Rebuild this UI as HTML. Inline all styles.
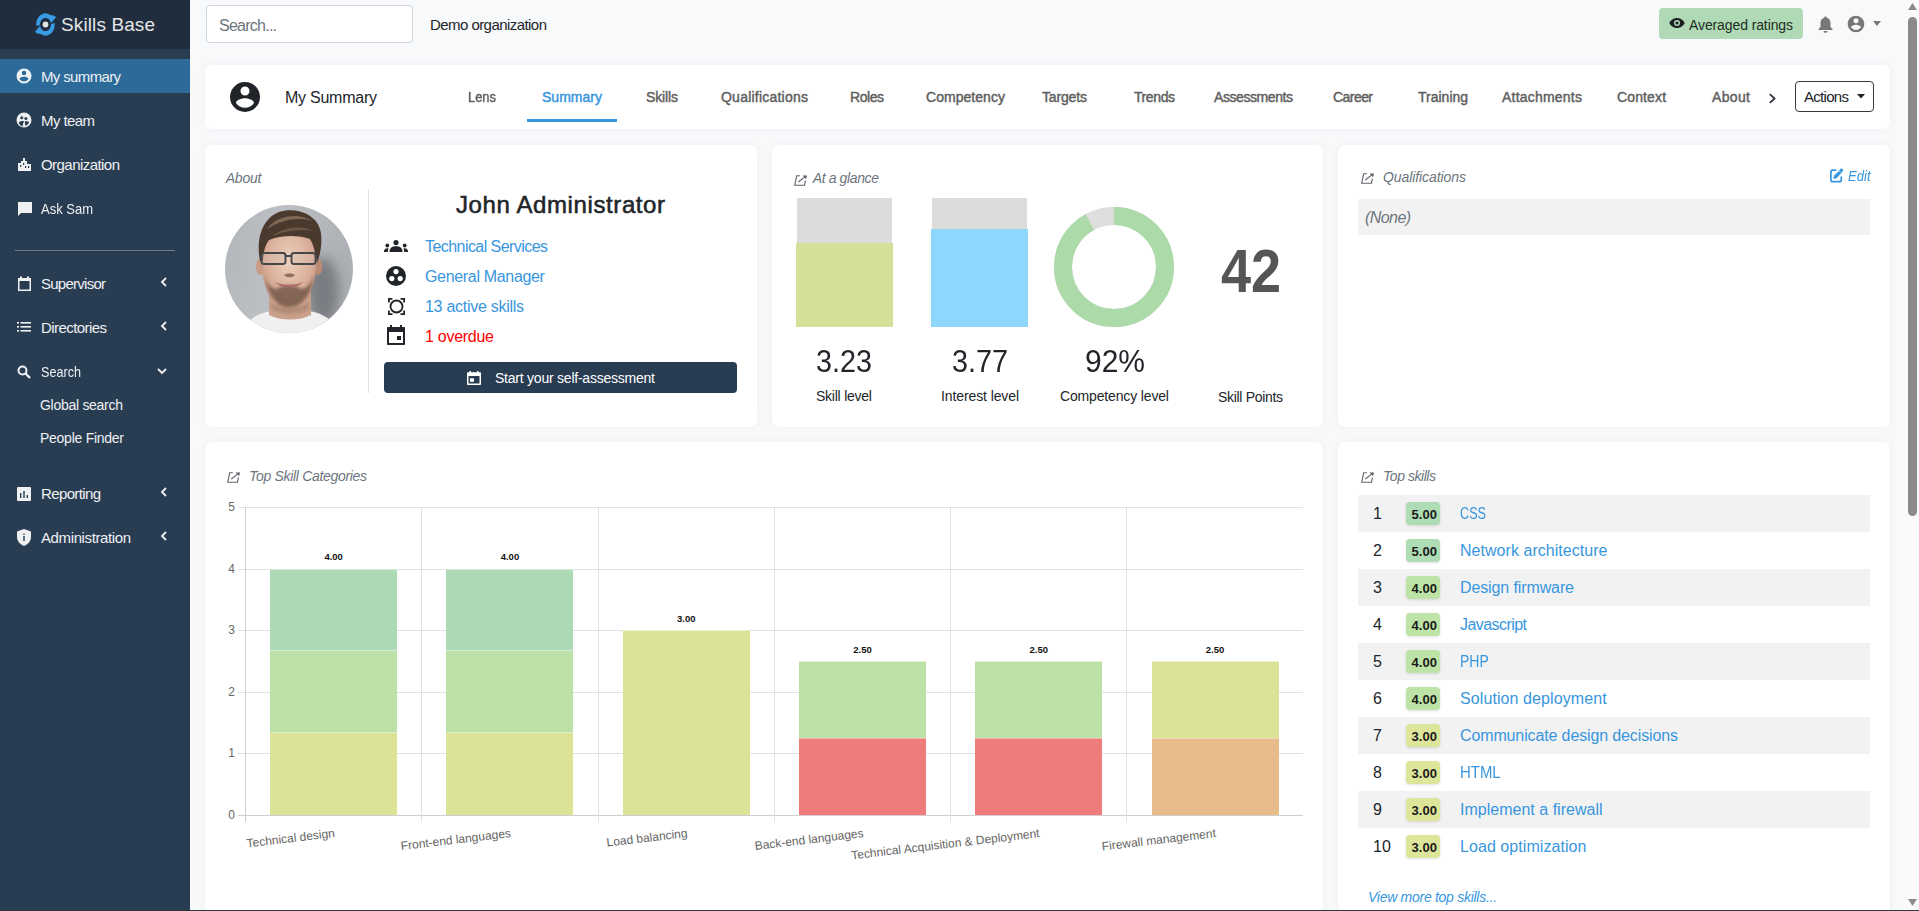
<!DOCTYPE html>
<html><head><meta charset="utf-8"><title>Skills Base</title>
<style>
html,body{margin:0;padding:0;}
body{width:1919px;height:911px;overflow:hidden;background:#f7f9fb;position:relative;font-family:"Liberation Sans",sans-serif;}
.t{position:absolute;line-height:1;white-space:nowrap;}
.r{position:absolute;}
</style></head><body>
<div class="r" style="left:0px;top:0px;width:190px;height:911px;background:#293d52;"></div>
<div class="r" style="left:0px;top:0px;width:190px;height:49px;background:#1f2d3f;"></div>
<div class="r" style="left:0px;top:59px;width:190px;height:34px;background:#2c6a99;"></div>
<svg class="r" style="left:30px;top:8px;" width="30" height="30" viewBox="0 0 30 30"><g transform="translate(0 16.5) scale(1 1.2) translate(0 -16.5)"><path d="M6.39 17.78A9.2 9.2 0 0 1 20.10 8.53Q24.0 8.6 26.2 10.2L20.88 15.36A5.5 5.5 0 0 0 10.02 16.98Z" fill="#399be2"/><path d="M6.39 17.78A9.2 9.2 0 0 1 20.10 8.53Q24.0 8.6 26.2 10.2L20.88 15.36A5.5 5.5 0 0 0 10.02 16.98Z" fill="#399be2" transform="rotate(180 15.5 16.5)"/></g><circle cx="15.5" cy="16.5" r="2.9" fill="#e4e4e4"/></svg>
<div class="t" style="left:61.00px;top:14.91px;font-size:19px;color:#e6e6e6;letter-spacing:0.109px;">Skills Base</div>
<svg class="r" style="left:15px;top:67px;" width="18" height="18" viewBox="0 0 24 24"><path d="M12,19.2C9.5,19.2 7.29,17.92 6,16C6.03,14 10,12.9 12,12.9C14,12.9 17.97,14 18,16C16.71,17.92 14.5,19.2 12,19.2M12,5A3,3 0 0,1 15,8A3,3 0 0,1 12,11A3,3 0 0,1 9,8A3,3 0 0,1 12,5M12,2A10,10 0 0,0 2,12A10,10 0 0,0 12,22A10,10 0 0,0 22,12C22,6.47 17.5,2 12,2Z" fill="#eef0f2"/></svg>
<div class="t" style="left:41.00px;top:69.30px;font-size:15px;color:#eef0f2;letter-spacing:-0.644px;">My summary</div>
<svg class="r" style="left:15px;top:111px;" width="18" height="18" viewBox="0 0 24 24"><path d="M12 2A10 10 0 1 0 12 22A10 10 0 1 0 12 2Z" fill="#eef0f2"/><circle cx="9" cy="9" r="2" fill="#293d52"/><circle cx="14.5" cy="10" r="2" fill="#293d52"/><path d="M5 16C6 13 11 13 12 14C11 16 10 19 10 21C8 20 6 18 5 16Z" fill="#293d52"/><path d="M13 14C15 13 18 14 19 15C18 17 16 19 14 20C14 18 13 16 13 14Z" fill="#293d52"/></svg>
<div class="t" style="left:41.00px;top:113.30px;font-size:15px;color:#eef0f2;letter-spacing:-0.587px;">My team</div>
<svg class="r" style="left:17px;top:157px;" width="15" height="15" viewBox="0 0 15 15"><path d="M1 14V6H4V4H6V1H8V4H10V7H14V14Z" fill="#eef0f2"/><rect x="3" y="8" width="1.2" height="2" fill="#293d52"/><rect x="6" y="6" width="1.2" height="2" fill="#293d52"/><rect x="8" y="9" width="1.2" height="2" fill="#293d52"/><rect x="11" y="9" width="1.2" height="2" fill="#293d52"/></svg>
<div class="t" style="left:41.00px;top:157.29px;font-size:15px;color:#eef0f2;letter-spacing:-0.550px;">Organization</div>
<svg class="r" style="left:17px;top:201px;" width="16" height="16" viewBox="0 0 16 16"><path d="M1 1H15V12H4L1 15Z" fill="#eef0f2"/></svg>
<div class="t" style="left:41.00px;top:201.29px;font-size:15px;color:#eef0f2;transform:scaleX(0.8667);transform-origin:0.00px 0;">Ask Sam</div>
<div class="r" style="left:15px;top:250px;width:160px;height:1px;background:#6d7b8a;"></div>
<svg class="r" style="left:17px;top:276px;" width="15" height="15" viewBox="0 0 15 15"><path d="M1 2H3V0.5H5V2H10V0.5H12V2H14V15H1Z M2.5 5V13.5H12.5V5Z" fill="#eef0f2" fill-rule="evenodd"/></svg>
<div class="t" style="left:41.00px;top:276.30px;font-size:15px;color:#eef0f2;letter-spacing:-0.744px;">Supervisor</div>
<svg class="r" style="left:17px;top:322px;" width="14" height="10" viewBox="0 0 14 10"><rect x="0" y="0" width="2" height="1.6" fill="#eef0f2"/><rect x="3.5" y="0" width="10.5" height="1.6" fill="#eef0f2"/><rect x="0" y="4" width="2" height="1.6" fill="#eef0f2"/><rect x="3.5" y="4" width="10.5" height="1.6" fill="#eef0f2"/><rect x="0" y="8" width="2" height="1.6" fill="#eef0f2"/><rect x="3.5" y="8" width="10.5" height="1.6" fill="#eef0f2"/></svg>
<div class="t" style="left:41.00px;top:320.30px;font-size:15px;color:#eef0f2;letter-spacing:-0.570px;">Directories</div>
<svg class="r" style="left:17px;top:365px;" width="14" height="14" viewBox="0 0 14 14"><circle cx="5.5" cy="5.5" r="4" fill="none" stroke="#eef0f2" stroke-width="2"/><path d="M8.5 8.5L13 13" stroke="#eef0f2" stroke-width="2.4"/></svg>
<div class="t" style="left:41.00px;top:364.30px;font-size:15px;color:#eef0f2;transform:scaleX(0.8412);transform-origin:0.00px 0;">Search</div>
<div class="t" style="left:40.00px;top:398.14px;font-size:14px;color:#eef0f2;letter-spacing:-0.282px;">Global search</div>
<div class="t" style="left:40.00px;top:431.14px;font-size:14px;color:#eef0f2;letter-spacing:-0.263px;">People Finder</div>
<svg class="r" style="left:17px;top:487px;" width="14" height="14" viewBox="0 0 14 14"><path d="M1 0H13A1 1 0 0 1 14 1V13A1 1 0 0 1 13 14H1A1 1 0 0 1 0 13V1A1 1 0 0 1 1 0Z" fill="#eef0f2"/><rect x="3" y="6" width="1.4" height="5" fill="#293d52"/><rect x="6.3" y="4" width="1.4" height="7" fill="#293d52"/><rect x="9.6" y="8" width="1.4" height="3" fill="#293d52"/></svg>
<div class="t" style="left:41.00px;top:486.30px;font-size:15px;color:#eef0f2;letter-spacing:-0.628px;">Reporting</div>
<svg class="r" style="left:17px;top:529px;" width="14" height="17" viewBox="0 0 14 17"><path d="M7 0L14 2.5V8C14 12 11 15.5 7 17C3 15.5 0 12 0 8V2.5Z" fill="#eef0f2"/><rect x="6.3" y="7" width="1.4" height="5" fill="#293d52"/><rect x="6.3" y="4.5" width="1.4" height="1.4" fill="#293d52"/></svg>
<div class="t" style="left:41.00px;top:530.29px;font-size:15px;color:#eef0f2;letter-spacing:-0.387px;">Administration</div>
<svg class="r" style="left:160px;top:277px;" width="7" height="10" viewBox="0 0 7 10"><path d="M6 1L2 5L6 9" fill="none" stroke="#eef0f2" stroke-width="1.8"/></svg>
<svg class="r" style="left:160px;top:321px;" width="7" height="10" viewBox="0 0 7 10"><path d="M6 1L2 5L6 9" fill="none" stroke="#eef0f2" stroke-width="1.8"/></svg>
<svg class="r" style="left:160px;top:531px;" width="7" height="10" viewBox="0 0 7 10"><path d="M6 1L2 5L6 9" fill="none" stroke="#eef0f2" stroke-width="1.8"/></svg>
<svg class="r" style="left:160px;top:487px;" width="7" height="10" viewBox="0 0 7 10"><path d="M6 1L2 5L6 9" fill="none" stroke="#eef0f2" stroke-width="1.8"/></svg>
<svg class="r" style="left:157px;top:368px;" width="10" height="7" viewBox="0 0 10 7"><path d="M1 1L5 5L9 1" fill="none" stroke="#eef0f2" stroke-width="1.8"/></svg>
<div class="r" style="left:206px;top:5px;width:207px;height:38px;background:#fff;border:1px solid #ced4da;border-radius:4px;box-sizing:border-box;"></div>
<div class="t" style="left:219.00px;top:18.45px;font-size:16px;color:#6c757d;letter-spacing:-0.750px;">Search...</div>
<div class="t" style="left:430.00px;top:17.30px;font-size:15px;color:#212529;letter-spacing:-0.558px;">Demo organization</div>
<div class="r" style="left:1659px;top:8px;width:144px;height:31px;background:#b0dab5;border-radius:4px;"></div>
<svg class="r" style="left:1669px;top:17px;" width="16" height="12" viewBox="0 0 16 12"><path d="M8 1C4.5 1 1.5 3.3 0.3 6C1.5 8.7 4.5 11 8 11C11.5 11 14.5 8.7 15.7 6C14.5 3.3 11.5 1 8 1Z" fill="#1d2124"/><circle cx="8" cy="6" r="3" fill="#b0dab5"/><circle cx="8" cy="6" r="1.6" fill="#1d2124"/></svg>
<div class="t" style="left:1689.00px;top:18.14px;font-size:14px;color:#1d2d1f;letter-spacing:-0.104px;">Averaged ratings</div>
<svg class="r" style="left:1818px;top:15px;" width="15" height="18" viewBox="0 0 15 18"><path d="M7.5 1.5C8.3 1.5 8.8 2 8.8 2.7C11 3.3 12.5 5.3 12.5 7.7V12L14.5 14V15H0.5V14L2.5 12V7.7C2.5 5.3 4 3.3 6.2 2.7C6.2 2 6.7 1.5 7.5 1.5Z M5.5 16H9.5C9.5 17 8.6 17.8 7.5 17.8C6.4 17.8 5.5 17 5.5 16Z" fill="#777"/></svg>
<svg class="r" style="left:1846px;top:14px;" width="20" height="20" viewBox="0 0 24 24"><path d="M12,19.2C9.5,19.2 7.29,17.92 6,16C6.03,14 10,12.9 12,12.9C14,12.9 17.97,14 18,16C16.71,17.92 14.5,19.2 12,19.2M12,5A3,3 0 0,1 15,8A3,3 0 0,1 12,11A3,3 0 0,1 9,8A3,3 0 0,1 12,5M12,2A10,10 0 0,0 2,12A10,10 0 0,0 12,22A10,10 0 0,0 22,12C22,6.47 17.5,2 12,2Z" fill="#777"/></svg>
<svg class="r" style="left:1873px;top:21px;" width="8" height="5" viewBox="0 0 8 5"><path d="M0 0H8L4 5Z" fill="#777"/></svg>
<div class="r" style="left:205px;top:65px;width:1685px;height:64px;background:#fff;background:#fff;border-radius:7px;box-shadow:0 0 10px rgba(30,40,60,0.045);"></div>
<div class="r" style="left:205px;top:145px;width:552px;height:282px;background:#fff;background:#fff;border-radius:7px;box-shadow:0 0 10px rgba(30,40,60,0.045);"></div>
<div class="r" style="left:772px;top:145px;width:551px;height:282px;background:#fff;background:#fff;border-radius:7px;box-shadow:0 0 10px rgba(30,40,60,0.045);"></div>
<div class="r" style="left:1338px;top:145px;width:552px;height:282px;background:#fff;background:#fff;border-radius:7px;box-shadow:0 0 10px rgba(30,40,60,0.045);"></div>
<div class="r" style="left:205px;top:442px;width:1118px;height:480px;background:#fff;background:#fff;border-radius:7px;box-shadow:0 0 10px rgba(30,40,60,0.045);"></div>
<div class="r" style="left:1338px;top:442px;width:552px;height:480px;background:#fff;background:#fff;border-radius:7px;box-shadow:0 0 10px rgba(30,40,60,0.045);"></div>
<svg class="r" style="left:227px;top:79px;" width="36" height="36" viewBox="0 0 24 24"><path d="M12,19.2C9.5,19.2 7.29,17.92 6,16C6.03,14 10,12.9 12,12.9C14,12.9 17.97,14 18,16C16.71,17.92 14.5,19.2 12,19.2M12,5A3,3 0 0,1 15,8A3,3 0 0,1 12,11A3,3 0 0,1 9,8A3,3 0 0,1 12,5M12,2A10,10 0 0,0 2,12A10,10 0 0,0 12,22A10,10 0 0,0 22,12C22,6.47 17.5,2 12,2Z" fill="#212529"/></svg>
<div class="t" style="left:285.00px;top:90.45px;font-size:16px;color:#212529;letter-spacing:-0.249px;">My Summary</div>
<div class="t" style="left:468.00px;top:90.14px;font-size:14px;color:#5f5f5f;transform:scaleX(0.9217);transform-origin:0.00px 0;-webkit-text-stroke:0.45px #5f5f5f;">Lens</div>
<div class="t" style="left:542.00px;top:90.14px;font-size:14px;color:#3896de;letter-spacing:0.013px;-webkit-text-stroke:0.45px #3896de;">Summary</div>
<div class="t" style="left:646.00px;top:90.14px;font-size:14px;color:#5f5f5f;letter-spacing:-0.138px;-webkit-text-stroke:0.45px #5f5f5f;">Skills</div>
<div class="t" style="left:721.00px;top:90.14px;font-size:14px;color:#5f5f5f;letter-spacing:0.225px;-webkit-text-stroke:0.45px #5f5f5f;">Qualifications</div>
<div class="t" style="left:850.00px;top:90.14px;font-size:14px;color:#5f5f5f;letter-spacing:-0.443px;-webkit-text-stroke:0.45px #5f5f5f;">Roles</div>
<div class="t" style="left:926.00px;top:90.14px;font-size:14px;color:#5f5f5f;letter-spacing:0.043px;-webkit-text-stroke:0.45px #5f5f5f;">Competency</div>
<div class="t" style="left:1042.00px;top:90.14px;font-size:14px;color:#5f5f5f;letter-spacing:-0.153px;-webkit-text-stroke:0.45px #5f5f5f;">Targets</div>
<div class="t" style="left:1134.00px;top:90.14px;font-size:14px;color:#5f5f5f;letter-spacing:-0.410px;-webkit-text-stroke:0.45px #5f5f5f;">Trends</div>
<div class="t" style="left:1214.00px;top:90.14px;font-size:14px;color:#5f5f5f;letter-spacing:-0.423px;-webkit-text-stroke:0.45px #5f5f5f;">Assessments</div>
<div class="t" style="left:1333.00px;top:90.14px;font-size:14px;color:#5f5f5f;letter-spacing:-0.554px;-webkit-text-stroke:0.45px #5f5f5f;">Career</div>
<div class="t" style="left:1418.00px;top:90.14px;font-size:14px;color:#5f5f5f;-webkit-text-stroke:0.45px #5f5f5f;">Training</div>
<div class="t" style="left:1502.00px;top:90.14px;font-size:14px;color:#5f5f5f;letter-spacing:0.216px;-webkit-text-stroke:0.45px #5f5f5f;">Attachments</div>
<div class="t" style="left:1617.00px;top:90.14px;font-size:14px;color:#5f5f5f;letter-spacing:0.128px;-webkit-text-stroke:0.45px #5f5f5f;">Context</div>
<div class="t" style="left:1712.00px;top:90.14px;font-size:14px;color:#5f5f5f;letter-spacing:0.347px;-webkit-text-stroke:0.45px #5f5f5f;">About</div>
<div class="r" style="left:527px;top:119px;width:90px;height:3px;background:#3896de;"></div>
<svg class="r" style="left:1768px;top:93px;" width="9" height="11" viewBox="0 0 9 11"><path d="M1.8 1.2L6.6 5.5L1.8 9.8" fill="none" stroke="#2a2f35" stroke-width="1.7"/></svg>
<div class="r" style="left:1795px;top:81px;width:79px;height:31px;background:#fff;border:1px solid #343a40;border-radius:4px;box-sizing:border-box;"></div>
<div class="t" style="left:1804.00px;top:89.30px;font-size:15px;color:#212529;letter-spacing:-0.700px;">Actions</div>
<svg class="r" style="left:1857px;top:94px;" width="8" height="4.5" viewBox="0 0 8 4.5"><path d="M0 0H8L4 4.5Z" fill="#212529"/></svg>
<div class="t" style="left:225.70px;top:171.14px;font-size:14px;color:#6c757d;font-style:italic;letter-spacing:-0.200px;">About</div>
<div class="r" style="left:368px;top:189px;width:1px;height:204px;background:#dee2e6;"></div>
<svg class="r" style="left:225px;top:205px;" width="128" height="128" viewBox="0 0 128 128">
<defs><clipPath id="pc"><circle cx="64" cy="64" r="64"/></clipPath>
<filter id="pb1" x="-30%" y="-30%" width="160%" height="160%"><feGaussianBlur stdDeviation="1.6"/></filter>
<filter id="pb2" x="-50%" y="-50%" width="200%" height="200%"><feGaussianBlur stdDeviation="6"/></filter>
<filter id="pb3"><feGaussianBlur stdDeviation="0.6"/></filter>
<linearGradient id="pbg" x1="0" y1="0" x2="1" y2="0.2"><stop offset="0" stop-color="#b2b5b9"/><stop offset="0.45" stop-color="#bcbfc3"/><stop offset="1" stop-color="#acafb3"/></linearGradient>
<radialGradient id="psk" cx="0.5" cy="0.38" r="0.65"><stop offset="0" stop-color="#ecd2c0"/><stop offset="0.65" stop-color="#d9ad97"/><stop offset="1" stop-color="#b98b74"/></radialGradient></defs>
<g clip-path="url(#pc)">
<rect width="128" height="128" fill="url(#pbg)"/>
<ellipse cx="98" cy="86" rx="16" ry="34" fill="#6f7378" opacity="0.85" filter="url(#pb2)"/>
<path d="M16 128C20 116 32 108 46 106L84 106C98 108 110 116 114 128Z" fill="#f0f0f0"/>
<path d="M44 84L86 84L86 110C74 116 56 116 44 110Z" fill="#c9a08a"/>
<path d="M46 98C56 104 74 104 84 98L84 104C74 110 56 110 46 104Z" fill="#a98270" opacity="0.7" filter="url(#pb1)"/>
<ellipse cx="35.5" cy="62" rx="4.5" ry="8" fill="#c99a84"/>
<ellipse cx="93" cy="62" rx="4.5" ry="8" fill="#b98a74"/>
<path d="M37 40C37 30 48 26 64 26C82 26 91 31 91 44L91 62C90 84 80 103 64 103C49 103 38 86 37 62Z" fill="url(#psk)"/>
<path d="M40 70C42 88 52 102 64 102C77 102 87 88 89 70C86 80 81 84 76 84C71 79 57 79 52 84C47 84 42 80 40 70Z" fill="#6e5747" opacity="0.8" filter="url(#pb1)"/>
<path d="M50 77C57 81 70 81 78 77C72 84 56 84 50 77Z" fill="#a86a62" filter="url(#pb3)"/>
<path d="M59 70C62 73 67 73 70 70C68 68 61 68 59 70Z" fill="#7d5a4a" opacity="0.8" filter="url(#pb3)"/>
<path d="M35 56C31 36 36 14 54 7C70 2 90 8 95 24C98 34 96 48 92 58C90 48 89 40 85 34C74 30 56 30 44 35C40 40 38 48 38 56Z" fill="#4a3a2e"/>
<path d="M42 24C50 12 70 6 88 16C74 12 58 14 42 24Z" fill="#7e6852" filter="url(#pb3)"/>
<path d="M48 31C58 22 76 20 88 26C76 24 62 25 48 31Z" fill="#6a5644" filter="url(#pb3)"/>
<rect x="36.5" y="48" width="24" height="11" rx="2.5" fill="#d8bdb0" fill-opacity="0.35" stroke="#45474b" stroke-width="1.9"/>
<rect x="66.5" y="48" width="24" height="11" rx="2.5" fill="#d8bdb0" fill-opacity="0.35" stroke="#45474b" stroke-width="1.9"/>
<path d="M60.5 51H66.5" stroke="#45474b" stroke-width="1.8"/>
</g></svg>
<div class="t" style="left:456.00px;top:192.67px;font-size:24px;color:#212529;letter-spacing:0.605px;-webkit-text-stroke:0.55px #212529;">John Administrator</div>
<svg class="r" style="left:384px;top:240px;" width="24" height="12" viewBox="0 0 24 12"><circle cx="12" cy="2.6" r="2.6" fill="#212529"/><path d="M5.5 12C5.5 8 8 6.3 12 6.3C16 6.3 18.5 8 18.5 12Z" fill="#212529"/><circle cx="3.3" cy="5.5" r="1.9" fill="#212529"/><path d="M0 12C0 9.5 1 8.5 4.5 8.3C4 9.3 3.8 10.5 3.8 12Z" fill="#212529"/><circle cx="20.7" cy="5.5" r="1.9" fill="#212529"/><path d="M24 12C24 9.5 23 8.5 19.5 8.3C20 9.3 20.2 10.5 20.2 12Z" fill="#212529"/></svg>
<div class="t" style="left:425.00px;top:239.45px;font-size:16px;color:#3896de;letter-spacing:-0.558px;">Technical Services</div>
<svg class="r" style="left:386px;top:266px;" width="20" height="20" viewBox="0 0 20 20"><circle cx="10" cy="10" r="10" fill="#212529"/><circle cx="10" cy="5.6" r="2.6" fill="#fff"/><circle cx="5.8" cy="12.6" r="2.6" fill="#fff"/><circle cx="14.2" cy="12.6" r="2.6" fill="#fff"/></svg>
<div class="t" style="left:425.00px;top:269.45px;font-size:16px;color:#3896de;letter-spacing:-0.326px;">General Manager</div>
<svg class="r" style="left:388px;top:298px;" width="17" height="17" viewBox="0 0 17 17"><circle cx="8.5" cy="8.5" r="6" fill="none" stroke="#212529" stroke-width="1.8"/><path d="M0 0H4.5V1.8H1.8V4.5H0Z M17 0H12.5V1.8H15.2V4.5H17Z M0 17H4.5V15.2H1.8V12.5H0Z M17 17H12.5V15.2H15.2V12.5H17Z" fill="#212529"/></svg>
<div class="t" style="left:425.00px;top:299.45px;font-size:16px;color:#3896de;letter-spacing:-0.275px;">13 active skills</div>
<svg class="r" style="left:387px;top:325px;" width="18" height="20" viewBox="0 0 18 20"><path d="M3 0H5V2H13V0H15V2H17C17.6 2 18 2.4 18 3V19C18 19.6 17.6 20 17 20H1C0.4 20 0 19.6 0 19V3C0 2.4 0.4 2 1 2H3Z M2 7V18H16V7Z" fill="#212529" fill-rule="evenodd"/><rect x="10" y="11" width="4" height="4" fill="#212529"/></svg>
<div class="t" style="left:425.00px;top:329.45px;font-size:16px;color:#ff0000;letter-spacing:-0.275px;">1 overdue</div>
<div class="r" style="left:384px;top:362px;width:353px;height:31px;background:#283c52;border-radius:4px;"></div>
<svg class="r" style="left:467px;top:371px;" width="14" height="14" viewBox="0 0 14 14"><path d="M2.5 0H4V1.3H10V0H11.5V1.3H13C13.6 1.3 14 1.7 14 2.3V13C14 13.6 13.6 14 13 14H1C0.4 14 0 13.6 0 13V2.3C0 1.7 0.4 1.3 1 1.3H2.5Z M1.5 5V12.5H12.5V5Z" fill="#fff" fill-rule="evenodd"/><rect x="3" y="7.3" width="4" height="3.5" fill="#fff"/></svg>
<div class="t" style="left:495.00px;top:371.14px;font-size:14px;color:#ffffff;letter-spacing:-0.230px;">Start your self-assessment</div>
<svg class="r" style="left:794px;top:175px;" width="14" height="12" viewBox="0 0 14 12"><path d="M5.9 0.7H2.7L0.7 10.2H10.5L11.4 5.6" fill="none" stroke="#5f656b" stroke-width="1.15"/><path d="M4.3 7L12.2 0.9" stroke="#5f656b" stroke-width="1.15"/><path d="M8.6 0.4H13L12.1 4.2Z" fill="#5f656b"/></svg>
<div class="t" style="left:812.70px;top:171.14px;font-size:14px;color:#6c757d;font-style:italic;letter-spacing:-0.377px;">At a glance</div>
<div class="r" style="left:797px;top:198px;width:95px;height:45px;background:#dcdcdc;"></div>
<div class="r" style="left:796px;top:243px;width:97px;height:84px;background:#d4df9a;"></div>
<div class="r" style="left:932px;top:198px;width:95px;height:31px;background:#dcdcdc;"></div>
<div class="r" style="left:931px;top:229px;width:97px;height:98px;background:#8dd6fc;"></div>
<svg class="r" style="left:1054px;top:207px;" width="120" height="120" viewBox="0 0 120 120"><circle cx="60" cy="60" r="51" fill="none" stroke="#dedede" stroke-width="18"/><circle cx="60" cy="60" r="51" fill="none" stroke="#acdaa8" stroke-width="18" stroke-dasharray="294.81 320.44" transform="rotate(-90 60 60)"/></svg>
<div class="t" style="left:1221.00px;top:241.33px;font-size:61px;color:#555555;font-weight:700;transform:scaleX(0.8861);transform-origin:0.00px 0;">42</div>
<div class="t" style="left:816.00px;top:344.90px;font-size:32px;color:#212529;transform:scaleX(0.8997);transform-origin:0.00px 0;">3.23</div>
<div class="t" style="left:952.00px;top:344.90px;font-size:32px;color:#212529;transform:scaleX(0.8997);transform-origin:0.00px 0;">3.77</div>
<div class="t" style="left:1085.00px;top:344.90px;font-size:32px;color:#212529;transform:scaleX(0.9375);transform-origin:0.00px 0;">92%</div>
<div class="t" style="left:816.00px;top:389.14px;font-size:14px;color:#212529;letter-spacing:-0.238px;">Skill level</div>
<div class="t" style="left:941.00px;top:389.14px;font-size:14px;color:#212529;letter-spacing:-0.106px;">Interest level</div>
<div class="t" style="left:1060.00px;top:389.14px;font-size:14px;color:#212529;letter-spacing:-0.153px;">Competency level</div>
<div class="t" style="left:1218.00px;top:390.14px;font-size:14px;color:#212529;letter-spacing:-0.315px;">Skill Points</div>
<svg class="r" style="left:1361px;top:173px;" width="14" height="12" viewBox="0 0 14 12"><path d="M5.9 0.7H2.7L0.7 10.2H10.5L11.4 5.6" fill="none" stroke="#5f656b" stroke-width="1.15"/><path d="M4.3 7L12.2 0.9" stroke="#5f656b" stroke-width="1.15"/><path d="M8.6 0.4H13L12.1 4.2Z" fill="#5f656b"/></svg>
<div class="t" style="left:1383.00px;top:170.14px;font-size:14px;color:#6c757d;font-style:italic;letter-spacing:-0.082px;">Qualifications</div>
<svg class="r" style="left:1829px;top:168px;" width="16" height="16" viewBox="0 0 16 16"><path d="M7.2 2.1H3.6C2.6 2.1 1.9 2.8 1.9 3.8V12C1.9 13 2.6 13.7 3.6 13.7H10.6C11.6 13.7 12.3 13 12.3 12V8.6" fill="none" stroke="#3896de" stroke-width="1.7"/><path d="M4.3 10.9L5 7.8L10.9 1.9L13.3 4.3L7.4 10.2Z" fill="#3896de"/><circle cx="12.4" cy="2.3" r="1.7" fill="#3896de"/><path d="M9.9 2.9L12.3 5.3" stroke="#fff" stroke-width="0.6"/></svg>
<div class="t" style="left:1848.00px;top:169.14px;font-size:14px;color:#3896de;font-style:italic;transform:scaleX(0.9334);transform-origin:0.00px 0;">Edit</div>
<div class="r" style="left:1358px;top:199px;width:512px;height:36px;background:#f2f2f2;"></div>
<div class="t" style="left:1365.00px;top:210.45px;font-size:16px;color:#6c757d;font-style:italic;letter-spacing:-0.576px;">(None)</div>
<svg class="r" style="left:227px;top:472px;" width="14" height="12" viewBox="0 0 14 12"><path d="M5.9 0.7H2.7L0.7 10.2H10.5L11.4 5.6" fill="none" stroke="#5f656b" stroke-width="1.15"/><path d="M4.3 7L12.2 0.9" stroke="#5f656b" stroke-width="1.15"/><path d="M8.6 0.4H13L12.1 4.2Z" fill="#5f656b"/></svg>
<div class="t" style="left:249.00px;top:469.14px;font-size:14px;color:#6c757d;font-style:italic;letter-spacing:-0.314px;">Top Skill Categories</div>
<div class="r" style="left:238px;top:815px;width:1065.2px;height:1px;background:#cfcfcf;"></div>
<div class="t" style="left:228.17px;top:809.14px;font-size:12px;color:#666666;">0</div>
<div class="r" style="left:238px;top:753px;width:1065.2px;height:1px;background:#e1e1e1;"></div>
<div class="t" style="left:228.17px;top:747.14px;font-size:12px;color:#666666;">1</div>
<div class="r" style="left:238px;top:692px;width:1065.2px;height:1px;background:#e1e1e1;"></div>
<div class="t" style="left:228.17px;top:686.14px;font-size:12px;color:#666666;">2</div>
<div class="r" style="left:238px;top:630px;width:1065.2px;height:1px;background:#e1e1e1;"></div>
<div class="t" style="left:228.17px;top:624.14px;font-size:12px;color:#666666;">3</div>
<div class="r" style="left:238px;top:569px;width:1065.2px;height:1px;background:#e1e1e1;"></div>
<div class="t" style="left:228.17px;top:563.14px;font-size:12px;color:#666666;">4</div>
<div class="r" style="left:238px;top:507px;width:1065.2px;height:1px;background:#e1e1e1;"></div>
<div class="t" style="left:228.17px;top:501.14px;font-size:12px;color:#666666;">5</div>
<div class="r" style="left:245px;top:507px;width:1px;height:315px;background:#cfcfcf;"></div>
<div class="r" style="left:421px;top:507px;width:1px;height:315px;background:#e1e1e1;"></div>
<div class="r" style="left:598px;top:507px;width:1px;height:315px;background:#e1e1e1;"></div>
<div class="r" style="left:774px;top:507px;width:1px;height:315px;background:#e1e1e1;"></div>
<div class="r" style="left:950px;top:507px;width:1px;height:315px;background:#e1e1e1;"></div>
<div class="r" style="left:1126px;top:507px;width:1px;height:315px;background:#e1e1e1;"></div>
<div class="r" style="left:270.18px;top:732.95px;width:126.92px;height:82.05px;background:#dce396;"></div>
<div class="r" style="left:270.18px;top:650.89px;width:126.92px;height:82.05px;background:#bde0a7;"></div>
<div class="r" style="left:270.18px;top:732.45px;width:126.92px;height:1px;background:rgba(255,255,255,0.45);"></div>
<div class="r" style="left:270.18px;top:568.84px;width:126.92px;height:82.05px;background:#aed9b5;"></div>
<div class="r" style="left:270.18px;top:650.39px;width:126.92px;height:1px;background:rgba(255,255,255,0.45);"></div>
<div class="r" style="left:270.18px;top:568.84px;width:126.92px;height:1px;background:rgba(255,255,255,0.5);"></div>
<div class="t" style="left:324.40px;top:552.29px;font-size:9.5px;color:#111;font-weight:700;">4.00</div>
<div class="t" style="left:245.92px;top:827.00px;font-size:12px;line-height:12px;color:#666;transform-origin:100% 50%;transform:rotate(-6.8deg);">Technical design</div>
<div class="r" style="left:446.46px;top:732.95px;width:126.92px;height:82.05px;background:#dce396;"></div>
<div class="r" style="left:446.46px;top:650.89px;width:126.92px;height:82.05px;background:#bde0a7;"></div>
<div class="r" style="left:446.46px;top:732.45px;width:126.92px;height:1px;background:rgba(255,255,255,0.45);"></div>
<div class="r" style="left:446.46px;top:568.84px;width:126.92px;height:82.05px;background:#aed9b5;"></div>
<div class="r" style="left:446.46px;top:650.39px;width:126.92px;height:1px;background:rgba(255,255,255,0.45);"></div>
<div class="r" style="left:446.46px;top:568.84px;width:126.92px;height:1px;background:rgba(255,255,255,0.5);"></div>
<div class="t" style="left:500.69px;top:552.29px;font-size:9.5px;color:#111;font-weight:700;">4.00</div>
<div class="t" style="left:400.18px;top:827.00px;font-size:12px;line-height:12px;color:#666;transform-origin:100% 50%;transform:rotate(-6.8deg);">Front-end languages</div>
<div class="r" style="left:622.75px;top:630.38px;width:126.92px;height:184.62px;background:#dce396;"></div>
<div class="r" style="left:622.75px;top:630.38px;width:126.92px;height:1px;background:rgba(255,255,255,0.5);"></div>
<div class="t" style="left:676.97px;top:613.83px;font-size:9.5px;color:#111;font-weight:700;">3.00</div>
<div class="t" style="left:605.80px;top:827.00px;font-size:12px;line-height:12px;color:#666;transform-origin:100% 50%;transform:rotate(-6.8deg);">Load balancing</div>
<div class="r" style="left:799.03px;top:738.08px;width:126.92px;height:76.92px;background:#ef7b7b;"></div>
<div class="r" style="left:799.03px;top:661.15px;width:126.92px;height:76.93px;background:#bde0a7;"></div>
<div class="r" style="left:799.03px;top:737.58px;width:126.92px;height:1px;background:rgba(255,255,255,0.45);"></div>
<div class="r" style="left:799.03px;top:661.15px;width:126.92px;height:1px;background:rgba(255,255,255,0.5);"></div>
<div class="t" style="left:853.25px;top:644.60px;font-size:9.5px;color:#111;font-weight:700;">2.50</div>
<div class="t" style="left:754.08px;top:827.00px;font-size:12px;line-height:12px;color:#666;transform-origin:100% 50%;transform:rotate(-6.8deg);">Back-end languages</div>
<div class="r" style="left:975.31px;top:738.08px;width:126.92px;height:76.92px;background:#ef7b7b;"></div>
<div class="r" style="left:975.31px;top:661.15px;width:126.92px;height:76.93px;background:#bde0a7;"></div>
<div class="r" style="left:975.31px;top:737.58px;width:126.92px;height:1px;background:rgba(255,255,255,0.45);"></div>
<div class="r" style="left:975.31px;top:661.15px;width:126.92px;height:1px;background:rgba(255,255,255,0.5);"></div>
<div class="t" style="left:1029.54px;top:644.60px;font-size:9.5px;color:#111;font-weight:700;">2.50</div>
<div class="t" style="left:850.34px;top:827.00px;font-size:12px;line-height:12px;color:#666;transform-origin:100% 50%;transform:rotate(-6.8deg);">Technical Acquisition &amp; Deployment</div>
<div class="r" style="left:1151.60px;top:738.08px;width:126.92px;height:76.92px;background:#e7bb8a;"></div>
<div class="r" style="left:1151.60px;top:661.15px;width:126.92px;height:76.93px;background:#dce396;"></div>
<div class="r" style="left:1151.60px;top:737.58px;width:126.92px;height:1px;background:rgba(255,255,255,0.45);"></div>
<div class="r" style="left:1151.60px;top:661.15px;width:126.92px;height:1px;background:rgba(255,255,255,0.5);"></div>
<div class="t" style="left:1205.82px;top:644.60px;font-size:9.5px;color:#111;font-weight:700;">2.50</div>
<div class="t" style="left:1101.34px;top:827.00px;font-size:12px;line-height:12px;color:#666;transform-origin:100% 50%;transform:rotate(-6.8deg);">Firewall management</div>
<svg class="r" style="left:1361px;top:472px;" width="14" height="12" viewBox="0 0 14 12"><path d="M5.9 0.7H2.7L0.7 10.2H10.5L11.4 5.6" fill="none" stroke="#5f656b" stroke-width="1.15"/><path d="M4.3 7L12.2 0.9" stroke="#5f656b" stroke-width="1.15"/><path d="M8.6 0.4H13L12.1 4.2Z" fill="#5f656b"/></svg>
<div class="t" style="left:1383.00px;top:469.14px;font-size:14px;color:#6c757d;font-style:italic;letter-spacing:-0.450px;">Top skills</div>
<div class="r" style="left:1358px;top:495px;width:512px;height:37px;background:#f2f2f2;"></div>
<div class="t" style="left:1373.00px;top:506.45px;font-size:16px;color:#212529;">1</div>
<div class="r" style="left:1406px;top:502px;width:34px;height:23px;background:#aedcb5;border-radius:4px;box-shadow:0 1px 3px rgba(0,0,0,0.12);"></div>
<div class="t" style="left:1411.60px;top:508.11px;font-size:13px;color:#1a1a1a;font-weight:700;font-family:"Liberation Serif", serif;transform:scaleX(1.0286);transform-origin:0.00px 0;">5.00</div>
<div class="t" style="left:1460.00px;top:506.45px;font-size:16px;color:#3896de;transform:scaleX(0.7908);transform-origin:0.00px 0;">CSS</div>
<div class="t" style="left:1373.00px;top:543.45px;font-size:16px;color:#212529;">2</div>
<div class="r" style="left:1406px;top:539px;width:34px;height:23px;background:#aedcb5;border-radius:4px;box-shadow:0 1px 3px rgba(0,0,0,0.12);"></div>
<div class="t" style="left:1411.60px;top:545.11px;font-size:13px;color:#1a1a1a;font-weight:700;font-family:"Liberation Serif", serif;transform:scaleX(1.0286);transform-origin:0.00px 0;">5.00</div>
<div class="t" style="left:1460.00px;top:543.45px;font-size:16px;color:#3896de;letter-spacing:0.041px;">Network architecture</div>
<div class="r" style="left:1358px;top:569px;width:512px;height:37px;background:#f2f2f2;"></div>
<div class="t" style="left:1373.00px;top:580.45px;font-size:16px;color:#212529;">3</div>
<div class="r" style="left:1406px;top:576px;width:34px;height:23px;background:#bde3a6;border-radius:4px;box-shadow:0 1px 3px rgba(0,0,0,0.12);"></div>
<div class="t" style="left:1411.60px;top:582.11px;font-size:13px;color:#1a1a1a;font-weight:700;font-family:"Liberation Serif", serif;transform:scaleX(1.0286);transform-origin:0.00px 0;">4.00</div>
<div class="t" style="left:1460.00px;top:580.45px;font-size:16px;color:#3896de;letter-spacing:-0.114px;">Design firmware</div>
<div class="t" style="left:1373.00px;top:617.45px;font-size:16px;color:#212529;">4</div>
<div class="r" style="left:1406px;top:613px;width:34px;height:23px;background:#bde3a6;border-radius:4px;box-shadow:0 1px 3px rgba(0,0,0,0.12);"></div>
<div class="t" style="left:1411.60px;top:619.11px;font-size:13px;color:#1a1a1a;font-weight:700;font-family:"Liberation Serif", serif;transform:scaleX(1.0286);transform-origin:0.00px 0;">4.00</div>
<div class="t" style="left:1460.00px;top:617.45px;font-size:16px;color:#3896de;letter-spacing:-0.556px;">Javascript</div>
<div class="r" style="left:1358px;top:643px;width:512px;height:37px;background:#f2f2f2;"></div>
<div class="t" style="left:1373.00px;top:654.45px;font-size:16px;color:#212529;">5</div>
<div class="r" style="left:1406px;top:650px;width:34px;height:23px;background:#bde3a6;border-radius:4px;box-shadow:0 1px 3px rgba(0,0,0,0.12);"></div>
<div class="t" style="left:1411.60px;top:656.11px;font-size:13px;color:#1a1a1a;font-weight:700;font-family:"Liberation Serif", serif;transform:scaleX(1.0286);transform-origin:0.00px 0;">4.00</div>
<div class="t" style="left:1460.00px;top:654.45px;font-size:16px;color:#3896de;transform:scaleX(0.8729);transform-origin:0.00px 0;">PHP</div>
<div class="t" style="left:1373.00px;top:691.45px;font-size:16px;color:#212529;">6</div>
<div class="r" style="left:1406px;top:687px;width:34px;height:23px;background:#bde3a6;border-radius:4px;box-shadow:0 1px 3px rgba(0,0,0,0.12);"></div>
<div class="t" style="left:1411.60px;top:693.11px;font-size:13px;color:#1a1a1a;font-weight:700;font-family:"Liberation Serif", serif;transform:scaleX(1.0286);transform-origin:0.00px 0;">4.00</div>
<div class="t" style="left:1460.00px;top:691.45px;font-size:16px;color:#3896de;letter-spacing:0.091px;">Solution deployment</div>
<div class="r" style="left:1358px;top:717px;width:512px;height:37px;background:#f2f2f2;"></div>
<div class="t" style="left:1373.00px;top:728.45px;font-size:16px;color:#212529;">7</div>
<div class="r" style="left:1406px;top:724px;width:34px;height:23px;background:#dde59a;border-radius:4px;box-shadow:0 1px 3px rgba(0,0,0,0.12);"></div>
<div class="t" style="left:1411.60px;top:730.11px;font-size:13px;color:#1a1a1a;font-weight:700;font-family:"Liberation Serif", serif;transform:scaleX(1.0286);transform-origin:0.00px 0;">3.00</div>
<div class="t" style="left:1460.00px;top:728.45px;font-size:16px;color:#3896de;letter-spacing:-0.127px;">Communicate design decisions</div>
<div class="t" style="left:1373.00px;top:765.45px;font-size:16px;color:#212529;">8</div>
<div class="r" style="left:1406px;top:761px;width:34px;height:23px;background:#dde59a;border-radius:4px;box-shadow:0 1px 3px rgba(0,0,0,0.12);"></div>
<div class="t" style="left:1411.60px;top:767.11px;font-size:13px;color:#1a1a1a;font-weight:700;font-family:"Liberation Serif", serif;transform:scaleX(1.0286);transform-origin:0.00px 0;">3.00</div>
<div class="t" style="left:1460.00px;top:765.45px;font-size:16px;color:#3896de;transform:scaleX(0.9329);transform-origin:0.00px 0;">HTML</div>
<div class="r" style="left:1358px;top:791px;width:512px;height:37px;background:#f2f2f2;"></div>
<div class="t" style="left:1373.00px;top:802.45px;font-size:16px;color:#212529;">9</div>
<div class="r" style="left:1406px;top:798px;width:34px;height:23px;background:#dde59a;border-radius:4px;box-shadow:0 1px 3px rgba(0,0,0,0.12);"></div>
<div class="t" style="left:1411.60px;top:804.11px;font-size:13px;color:#1a1a1a;font-weight:700;font-family:"Liberation Serif", serif;transform:scaleX(1.0286);transform-origin:0.00px 0;">3.00</div>
<div class="t" style="left:1460.00px;top:802.45px;font-size:16px;color:#3896de;letter-spacing:0.014px;">Implement a firewall</div>
<div class="t" style="left:1373.00px;top:839.45px;font-size:16px;color:#212529;">10</div>
<div class="r" style="left:1406px;top:835px;width:34px;height:23px;background:#dde59a;border-radius:4px;box-shadow:0 1px 3px rgba(0,0,0,0.12);"></div>
<div class="t" style="left:1411.60px;top:841.11px;font-size:13px;color:#1a1a1a;font-weight:700;font-family:"Liberation Serif", serif;transform:scaleX(1.0286);transform-origin:0.00px 0;">3.00</div>
<div class="t" style="left:1460.00px;top:839.45px;font-size:16px;color:#3896de;letter-spacing:0.066px;">Load optimization</div>
<div class="t" style="left:1368.00px;top:890.14px;font-size:14px;color:#3896de;font-style:italic;letter-spacing:-0.277px;">View more top skills...</div>
<div class="r" style="left:1904px;top:0px;width:15px;height:911px;background:#fafafa;"></div>
<div class="r" style="left:1908px;top:17px;width:9px;height:499px;background:#8a8a8a;border-radius:5px;"></div>
<svg class="r" style="left:1908px;top:3px;" width="9" height="7" viewBox="0 0 9 7"><path d="M4.5 0L9 7H0Z" fill="#8a8a8a"/></svg>
<svg class="r" style="left:1908px;top:899px;" width="9" height="7" viewBox="0 0 9 7"><path d="M0 0H9L4.5 7Z" fill="#8a8a8a"/></svg>
<div class="r" style="left:0px;top:910px;width:1919px;height:1px;background:#30363f;"></div>
</body></html>
